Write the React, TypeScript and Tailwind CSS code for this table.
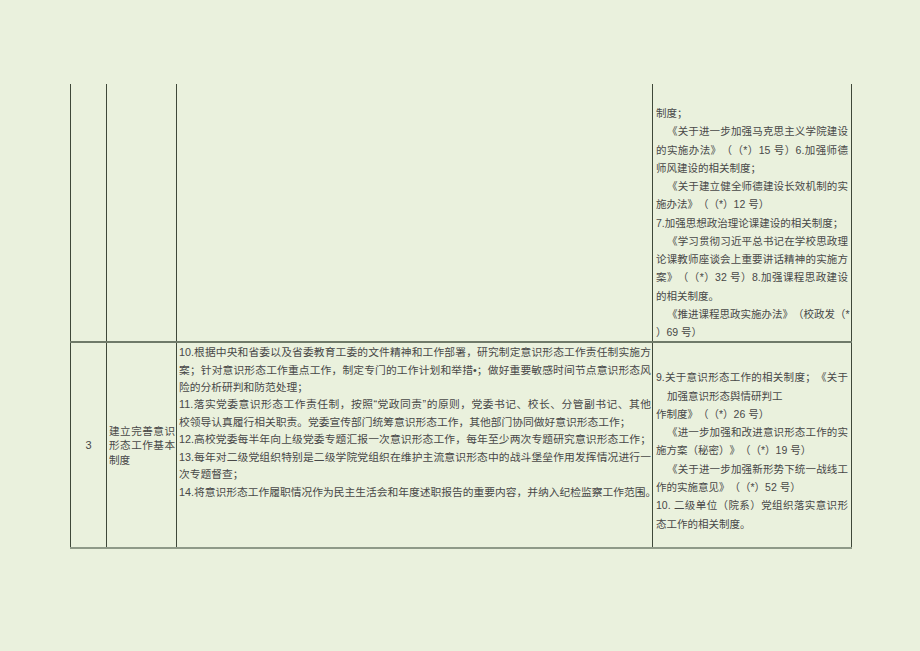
const font = { fontFamily: '"Liberation Sans", "Noto Sans CJK SC", sans-serif' };

type Line = { t: string; full?: boolean; indent?: boolean };

const row1Refs: Line[] = [
  { t: '制度；' },
  { t: '《关于进一步加强马克思主义学院建设', full: true, indent: true },
  { t: '的实施办法》（（*）15 号）6.加强师德', full: true },
  { t: '师风建设的相关制度；' },
  { t: '《关于建立健全师德建设长效机制的实', full: true, indent: true },
  { t: '施办法》（（*）12 号）' },
  { t: '7.加强思想政治理论课建设的相关制度；' },
  { t: '《学习贯彻习近平总书记在学校思政理', full: true, indent: true },
  { t: '论课教师座谈会上重要讲话精神的实施方', full: true },
  { t: '案》（（*）32 号）8.加强课程思政建设', full: true },
  { t: '的相关制度。' },
  { t: '《推进课程思政实施办法》（校政发（*', full: true, indent: true },
  { t: '）69 号）' },
];

const row2Tasks: Line[] = [
  { t: '10.根据中央和省委以及省委教育工委的文件精神和工作部署，研究制定意识形态工作责任制实施方', full: true },
  { t: '案；针对意识形态工作重点工作，制定专门的工作计划和举措•；做好重要敏感时间节点意识形态风', full: true },
  { t: '险的分析研判和防范处理；' },
  { t: '11.落实党委意识形态工作责任制，按照“党政同责”的原则，党委书记、校长、分管副书记、其他', full: true },
  { t: '校领导认真履行相关职责。党委宣传部门统筹意识形态工作，其他部门协同做好意识形态工作；' },
  { t: '12.高校党委每半年向上级党委专题汇报一次意识形态工作，每年至少两次专题研究意识形态工作；', full: true },
  { t: '13.每年对二级党组织特别是二级学院党组织在维护主流意识形态中的战斗堡垒作用发挥情况进行一', full: true },
  { t: '次专题督查；' },
  { t: '14.将意识形态工作履职情况作为民主生活会和年度述职报告的重要内容，并纳入纪检监察工作范围。', full: true },
];

const row2Refs: Line[] = [
  { t: '9.关于意识形态工作的相关制度；《关于', full: true },
  { t: '加强意识形态舆情研判工', indent: true },
  { t: '作制度》（（*）26 号）' },
  { t: '《进一步加强和改进意识形态工作的实', full: true, indent: true },
  { t: '施方案（秘密）》（（*）19 号）' },
  { t: '《关于进一步加强新形势下统一战线工', full: true, indent: true },
  { t: '作的实施意见》（（*）52 号）' },
  { t: '10. 二级单位（院系）党组织落实意识形', full: true },
  { t: '态工作的相关制度。' },
];

function Lines({ lines, indent }: { lines: Line[]; indent: string }) {
  return (
    <>
      {lines.map((l, i) => (
        <div
          key={i}
          className={`whitespace-nowrap overflow-visible ${l.full ? 'text-justify [text-align-last:justify]' : 'text-left'}`}
          style={l.indent ? { paddingLeft: indent } : undefined}
        >
          {l.t}
        </div>
      ))}
    </>
  );
}

export default function App() {
  return (
    <div
      className="w-[920px] h-[651px] bg-[#eaf1dd] overflow-hidden text-[#484848] [text-spacing-trim:space-all]"
      style={font}
    >
      <div className="pt-[84px] pl-[70px]">
        <table className="table-fixed border-collapse w-[781px]">
          <colgroup>
            <col className="w-[36px]" />
            <col className="w-[70px]" />
            <col className="w-[476px]" />
            <col className="w-[199px]" />
          </colgroup>
          <tbody>
            <tr className="h-[256px]">
              <td className="border-x border-[#3f4839] p-0" />
              <td className="border-x border-[#3f4839] p-0" />
              <td className="border-x border-[#3f4839] p-0" />
              <td className="border-x border-[#3f4839] align-top pt-[20px] pl-[3px] pr-[3px] text-[10.5px] leading-[18.25px]">
                <Lines lines={row1Refs} indent="11px" />
              </td>
            </tr>
            <tr className="h-[206px]">
              <td className="border-x border-y-2 border-x-[#3f4839] border-t-[#6f7a69] border-b-[#8f9a88] text-center align-middle text-[11px]">
                3
              </td>
              <td className="border-x border-y-2 border-x-[#3f4839] border-t-[#6f7a69] border-b-[#8f9a88] align-middle pl-[2px] pr-[1px] text-[10.6px] leading-[14.5px]">
                <div className="text-justify [text-align-last:justify] whitespace-nowrap">建立完善意识</div>
                <div className="text-justify [text-align-last:justify] whitespace-nowrap">形态工作基本</div>
                <div>制度</div>
              </td>
              <td className="border-x border-y-2 border-x-[#3f4839] border-t-[#6f7a69] border-b-[#8f9a88] align-top pt-[1px] pl-[2px] pr-[1px] text-[10.75px] leading-[17.4px]">
                <Lines lines={row2Tasks} indent="0px" />
              </td>
              <td className="border-x border-y-2 border-x-[#3f4839] border-t-[#6f7a69] border-b-[#8f9a88] align-top pt-[25px] pl-[3px] pr-[3px] text-[10.5px] leading-[18.3px]">
                <Lines lines={row2Refs} indent="11px" />
              </td>
            </tr>
          </tbody>
        </table>
      </div>
    </div>
  );
}
